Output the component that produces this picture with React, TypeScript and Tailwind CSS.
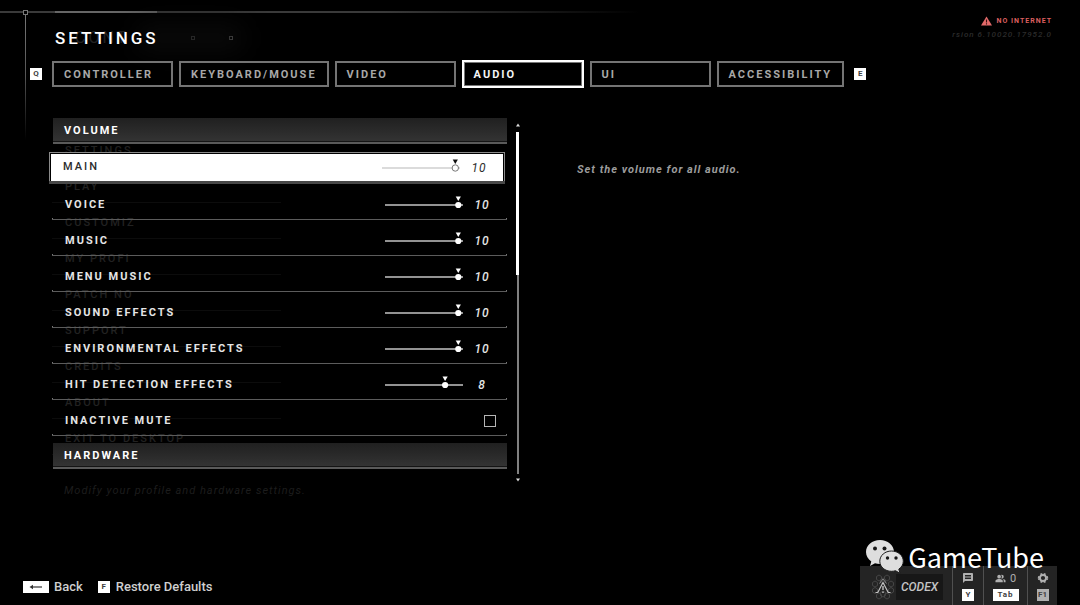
import { useState, type ReactNode } from "react";
import { MdMessage, MdPeopleAlt } from "react-icons/md";

const TABS = ["Controller", "Keyboard/Mouse", "Video", "Audio", "UI", "Accessibility"];

const LEVELS = [
  { id: "main", name: "Main", value: 10 },
  { id: "voice", name: "Voice", value: 10 },
  { id: "music", name: "Music", value: 10 },
  { id: "menu-music", name: "Menu Music", value: 10 },
  { id: "sound-effects", name: "Sound Effects", value: 10 },
  { id: "environmental", name: "Environmental Effects", value: 10 },
  { id: "hit-detection", name: "Hit Detection Effects", value: 8 },
];

const FADED_MENU = [
  "Settings",
  "Play",
  "Customiz",
  "My Profi",
  "Patch No",
  "Support",
  "Credits",
  "About",
  "Exit to Desktop",
];

function Key({ children, className = "w-3 bg-white" }: { children: ReactNode; className?: string }) {
  return (
    <kbd
      className={`flex h-3 shrink-0 items-center justify-center font-[Roboto,sans-serif] text-[8px] leading-none font-bold text-neutral-700 ${className}`}
    >
      {children}
    </kbd>
  );
}

function SectionHeader({ children }: { children: ReactNode }) {
  return (
    <h2 className="relative ml-px flex h-[26px] items-center border-b-2 border-[#5a5a5a] bg-linear-to-b from-[#202020] to-[#343434] px-[11px] pt-[3px] text-[11px] font-bold tracking-[2px] text-white uppercase shadow-[inset_0_-1px_0_#141414]">
      {children}
    </h2>
  );
}

function LevelSlider({
  id,
  value,
  inverted,
  onChange,
}: {
  id: string;
  value: number;
  inverted?: boolean;
  onChange: (value: number) => void;
}) {
  const x = 7.3 + value * 6.6;
  return (
    <div className="relative h-[18px] w-[78px]">
      <svg viewBox="0 0 78 18" className="block h-full w-full" aria-hidden="true">
        <path d="M0 9H78" stroke={inverted ? "#b8b8b8" : "#c4c4c4"} strokeWidth={inverted ? 1.2 : 1.6} />
        <path d={`M${x - 2.6} 0.500H${x + 2.6}L${x} 5Z`} fill={inverted ? "#111" : "#fff"} />
        <circle
          cx={x}
          cy={9}
          r={inverted ? 3.2 : 3.1}
          fill="#fff"
          stroke={inverted ? "#777" : "none"}
          strokeWidth={1}
        />
      </svg>
      <input
        id={id}
        type="range"
        min={0}
        max={10}
        value={value}
        onChange={(e) => onChange(Number(e.target.value))}
        className="absolute inset-0 m-0 h-full w-full cursor-pointer opacity-0"
      />
    </div>
  );
}

function RowLine() {
  return (
    <div className="flex h-[2px] justify-between border-b border-[#5c5c5c]">
      <span className="size-px bg-[#777]" />
      <span className="size-px bg-[#777]" />
    </div>
  );
}

function FadedMenu() {
  return (
    <div className="absolute top-0 left-0 flex w-[229px] flex-col pt-[13px] text-[#222]" aria-hidden="true">
      {FADED_MENU.map((item) => (
        <div
          key={item}
          className="flex h-9 items-center border-b border-[#0c0c0c] pt-[5px] pl-[13px] text-[11px] font-medium tracking-[2px] uppercase"
        >
          {item}
        </div>
      ))}
      <p className="pt-7 pl-3 text-[11px] tracking-[1px] whitespace-nowrap text-[#1d1d1d] italic">
        Modify your profile and hardware settings.
      </p>
    </div>
  );
}

function FrameLines() {
  return (
    <div className="pointer-events-none absolute inset-0" aria-hidden="true">
      <div className="absolute top-[11px] left-0 h-[2px] w-[640px] bg-linear-to-r from-[#3a3a3a] from-60% to-transparent" />
      <div className="absolute top-[11px] left-[55px] h-[2px] w-[102px] bg-[#666]" />
      <div className="absolute top-3 left-[25px] h-32 w-px bg-linear-to-b from-[#777] via-[#555] to-transparent" />
      <div className="absolute top-[10px] left-[23px] size-[5px] border border-[#777] bg-black" />
      <div className="absolute top-9 left-[191px] size-1 border border-[#888]" />
      <div className="absolute top-9 left-[229px] size-1 border border-[#888]" />
      <div className="absolute top-6 left-[135px] h-7 w-[110px] rounded-full bg-[#090909] blur-md" />
    </div>
  );
}

function Emblem() {
  return (
    <svg viewBox="0 0 26 26" className="size-[26px]" fill="none" aria-hidden="true">
      <g stroke="#454545" strokeWidth="1">
        <path d="M9 1l2.500 1.500v3L9 7 6.500 5.500v-3zM17 1l2.500 1.500v3L17 7l-2.500-1.500v-3z" />
        <path d="M5 7l2.500 1.500v3L5 13l-2.500-1.500v-3zM13 4l2.500 1.500v3L13 10l-2.500-1.500v-3zM21 7l2.500 1.500v3L21 13l-2.500-1.500v-3z" />
        <path d="M5 13.500L7.500 15v3L5 19.500 2.500 18v-3zM21 13.500l2.500 1.500v3L21 19.500 18.500 18v-3z" />
        <path d="M9 19l2.500 1.500v3L9 25l-2.500-1.500v-3zM17 19l2.500 1.500v3L17 25l-2.500-1.500v-3zM13 17l2.500 1.500v3L13 23l-2.500-1.500v-3z" />
      </g>
      <path d="M5.500 18.500h2.300L13 8.500l5.200 10h2.300" stroke="#c4c4c4" strokeWidth="1.200" />
      <path d="M9.500 9.500L13 5l3.500 4.500" stroke="#8a8a8a" />
      <path d="M13 12v4M13 17.500V19" stroke="#ddd" strokeWidth="1.200" />
    </svg>
  );
}

function Gear() {
  return (
    <svg viewBox="0 0 12 12" className="mb-[5px] size-3" fill="none" stroke="#b0b0b0" aria-hidden="true">
      <circle cx="6" cy="6" r="3" strokeWidth="1.800" />
      <path
        d="M4.400 1.200V3.200M7.600 1.200V3.200M4.400 8.800V10.800M7.600 8.800V10.800M1 4.800L2.800 5.400M1 7.200L2.800 6.600M11 4.800L9.200 5.400M11 7.200L9.200 6.600"
        strokeWidth="1.800"
      />
    </svg>
  );
}

function ChatBubbles() {
  return (
    <svg viewBox="0 0 38 34" className="h-[34px] w-[38px]" aria-hidden="true">
      <path
        d="M14 0C6.200 0 0 5.300 0 12c0 3.900 2 7.200 5.300 9.400L4 26l5-2.700c1.600.5 3.200.7 5 .7 7.700 0 14-5.300 14-12S21.700 0 14 0Z"
        fill="#dedede"
      />
      <circle cx="9" cy="8.500" r="2" fill="#161616" />
      <circle cx="18.500" cy="8.500" r="2" fill="#161616" />
      <path
        d="M25.500 11C19 11 13.800 15.500 13.800 21.200S19 31.300 25.500 31.300c1.400 0 2.700-.2 4-.6l4.500 2.600-1.200-4.200c2.700-1.800 4.500-4.700 4.500-7.900C37.300 15.500 32 11 25.500 11Z"
        fill="#dedede"
        stroke="#1c1c1c"
        strokeWidth="1"
      />
      <circle cx="21.500" cy="18" r="1.700" fill="#161616" />
      <circle cx="30" cy="18" r="1.700" fill="#161616" />
    </svg>
  );
}

export default function App() {
  const [tab, setTab] = useState("Audio");
  const [levels, setLevels] = useState(LEVELS);
  const [muted, setMuted] = useState(false);

  const setLevel = (id: string, value: number) =>
    setLevels(levels.map((level) => (level.id === id ? { ...level, value } : level)));

  return (
    <div className="relative flex min-h-screen flex-col overflow-hidden bg-black font-[Roboto,sans-serif] text-neutral-200">
      <FrameLines />

      <header className="relative flex h-[60px] items-start justify-between pr-7 pl-[55px]">
        <div className="relative pt-7">
          <span className="absolute top-7 left-5 text-[16px] leading-5 tracking-[3px] text-[#222]" aria-hidden="true">
            CONT
          </span>
          <h1 className="relative text-[17px] leading-5 font-medium tracking-[3px] text-white">SETTINGS</h1>
        </div>
        <div className="flex flex-col items-end pt-[15px]">
          <p className="flex items-center gap-[5px] text-[7px] leading-3 font-bold tracking-[1px] text-[#dc5f5f]">
            <svg viewBox="0 0 11 10" className="h-[10px] w-[11px]" aria-hidden="true">
              <path d="M5.500 0.500L11 9.500H0Z" fill="#e26a6a" />
              <path d="M5.500 3.500v3M5.500 7.300v1.200" stroke="#3a1010" strokeWidth="1.100" />
            </svg>
            NO INTERNET
          </p>
          <p className="text-[8px] leading-4 font-medium tracking-[1px] text-[#2c2c2c] italic">rsion 6.10020.17952.0</p>
        </div>
      </header>

      <nav className="relative flex h-7 items-center gap-[10px] pl-[30px]" aria-label="Settings sections">
        <Key>Q</Key>
        <div className="flex items-center gap-[6px]">
          {TABS.map((name) => (
            <button
              key={name}
              type="button"
              onClick={() => setTab(name)}
              className={
                name === tab
                  ? "flex h-7 min-w-[122px] items-center border-2 border-white px-[10px] text-[11px] leading-none font-bold tracking-[2px] text-neutral-100 uppercase shadow-[inset_0_0_0_1px_#777]"
                  : "flex h-[26px] min-w-[121px] items-center border-2 border-[#747474] px-[10px] text-[11px] leading-none font-bold tracking-[2px] text-[#a8a8a8] uppercase"
              }
            >
              {name}
            </button>
          ))}
        </div>
        <Key>E</Key>
      </nav>

      <main className="relative flex flex-1 items-start pt-[30px] pl-[52px]">
        <section className="relative w-[455px] shrink-0">
          <FadedMenu />
          <SectionHeader>Volume</SectionHeader>
          <div className="relative pt-1">
            {levels.map((level, i) =>
              i === 0 ? (
                <div key={level.id} className="-ml-[3px] h-9 pt-1">
                  <div className="w-[456px] border border-b-0 border-[#8a8a8a] bg-black px-px pt-px shadow-[0_3px_0_#484848]">
                    <div className="flex h-[27px] items-center bg-white px-3 text-[#2c2c2c]">
                      <label htmlFor={level.id} className="flex-1 text-[11px] font-medium tracking-[2px] uppercase">
                        {level.name}
                      </label>
                      <LevelSlider
                        id={level.id}
                        value={level.value}
                        inverted
                        onChange={(value) => setLevel(level.id, value)}
                      />
                      <output htmlFor={level.id} className="ml-[7px] w-6 text-center text-[12px] tracking-[1px] italic">
                        {level.value}
                      </output>
                    </div>
                  </div>
                </div>
              ) : (
                <div key={level.id} className="flex h-9 flex-col">
                  <div className="flex flex-1 items-center pt-2 pr-[13px] pl-[13px]">
                    <label htmlFor={level.id} className="flex-1 text-[11px] font-bold tracking-[2px] uppercase">
                      {level.name}
                    </label>
                    <LevelSlider
                      id={level.id}
                      value={level.value}
                      onChange={(value) => setLevel(level.id, value)}
                    />
                    <output
                      htmlFor={level.id}
                      className="ml-[7px] w-6 text-center text-[12px] font-medium tracking-[1px] italic"
                    >
                      {level.value}
                    </output>
                  </div>
                  <RowLine />
                </div>
              ),
            )}
            <div className="flex h-9 flex-col">
              <div className="flex flex-1 items-center pt-2 pr-[11px] pl-[13px]">
                <label htmlFor="inactive-mute" className="flex-1 text-[11px] font-bold tracking-[2px] uppercase">
                  Inactive Mute
                </label>
                <input
                  id="inactive-mute"
                  type="checkbox"
                  checked={muted}
                  onChange={(e) => setMuted(e.target.checked)}
                  className="m-0 size-3 appearance-none border border-[#b5b5b5] bg-black checked:bg-white"
                />
              </div>
              <RowLine />
            </div>
          </div>
          <div className="pt-[7px]">
            <SectionHeader>Hardware</SectionHeader>
          </div>
        </section>

        <div className="ml-2 flex h-[364px] w-[5px] shrink-0 flex-col items-center pt-[5px]" aria-hidden="true">
          <svg viewBox="0 0 4 4" className="size-1">
            <path d="M2 0.500L4 3.500H0Z" fill="#ddd" />
          </svg>
          <div className="mt-[5px] h-[143px] w-[3px] bg-white" />
          <div className="w-[2px] flex-1 bg-[#808080]" />
          <svg viewBox="0 0 4 4" className="mt-1 size-1">
            <path d="M2 3.500L4 0.500H0Z" fill="#ddd" />
          </svg>
        </div>

        <p className="ml-[57px] pt-11 text-[11px] leading-4 font-bold tracking-[1px] text-[#9c9c9c] italic">
          Set the volume for all audio.
        </p>
      </main>

      <footer className="relative flex h-[39px] items-start justify-between pr-[23px] pl-[23px]">
        <div className="flex items-center pt-[13px] text-[13px] leading-4 font-medium text-[#cfcfcf]">
          <button type="button" className="flex items-center gap-[5px]">
            <Key className="w-[26px] bg-white">
              <svg viewBox="0 0 14 6" className="h-[6px] w-[14px]" aria-hidden="true">
                <path d="M2 3H13" stroke="#333" strokeWidth="1.200" />
                <path d="M0.500 3L4 0.800V5.200Z" fill="#333" />
              </svg>
            </Key>
            Back
          </button>
          <button type="button" className="ml-[15px] flex items-center gap-[6px]">
            <Key>F</Key>
            Restore Defaults
          </button>
        </div>

        <div className="flex h-full items-stretch bg-[#242424] text-[#b0b0b0]">
          <div className="flex items-center pt-[3px] pr-[9px] pl-[10px]">
            <Emblem />
            <span className="flex h-[26px] w-[47px] items-center justify-center bg-[#171717] text-[12px] font-medium text-[#c4c4c4] italic">
              CODEX
            </span>
          </div>
          <button type="button" aria-label="Chat" className="flex w-[31px] flex-col items-center border-l border-[#505050] pt-[6px]">
            <MdMessage className="mb-[5px] size-3" />
            <Key>Y</Key>
          </button>
          <button type="button" aria-label="Party" className="flex w-11 flex-col items-center border-l border-[#505050] pt-[6px]">
            <span className="mb-[5px] flex h-3 items-center gap-1 text-[11px] leading-none">
              <MdPeopleAlt className="size-[11px]" />0
            </span>
            <Key className="w-[26px] bg-white tracking-[1px]">Tab</Key>
          </button>
          <button type="button" aria-label="Options" className="flex w-[30px] flex-col items-center border-l border-[#505050] pt-[6px]">
            <Gear />
            <Key className="w-3 bg-[#b0b0b0]">F1</Key>
          </button>
        </div>

        <div className="pointer-events-none absolute right-9 bottom-[31px] flex items-center gap-1">
          <ChatBubbles />
          <span className="font-['Noto_Sans_CJK_SC',sans-serif] text-[27px] leading-[34px] text-white">GameTube</span>
        </div>
      </footer>
    </div>
  );
}
